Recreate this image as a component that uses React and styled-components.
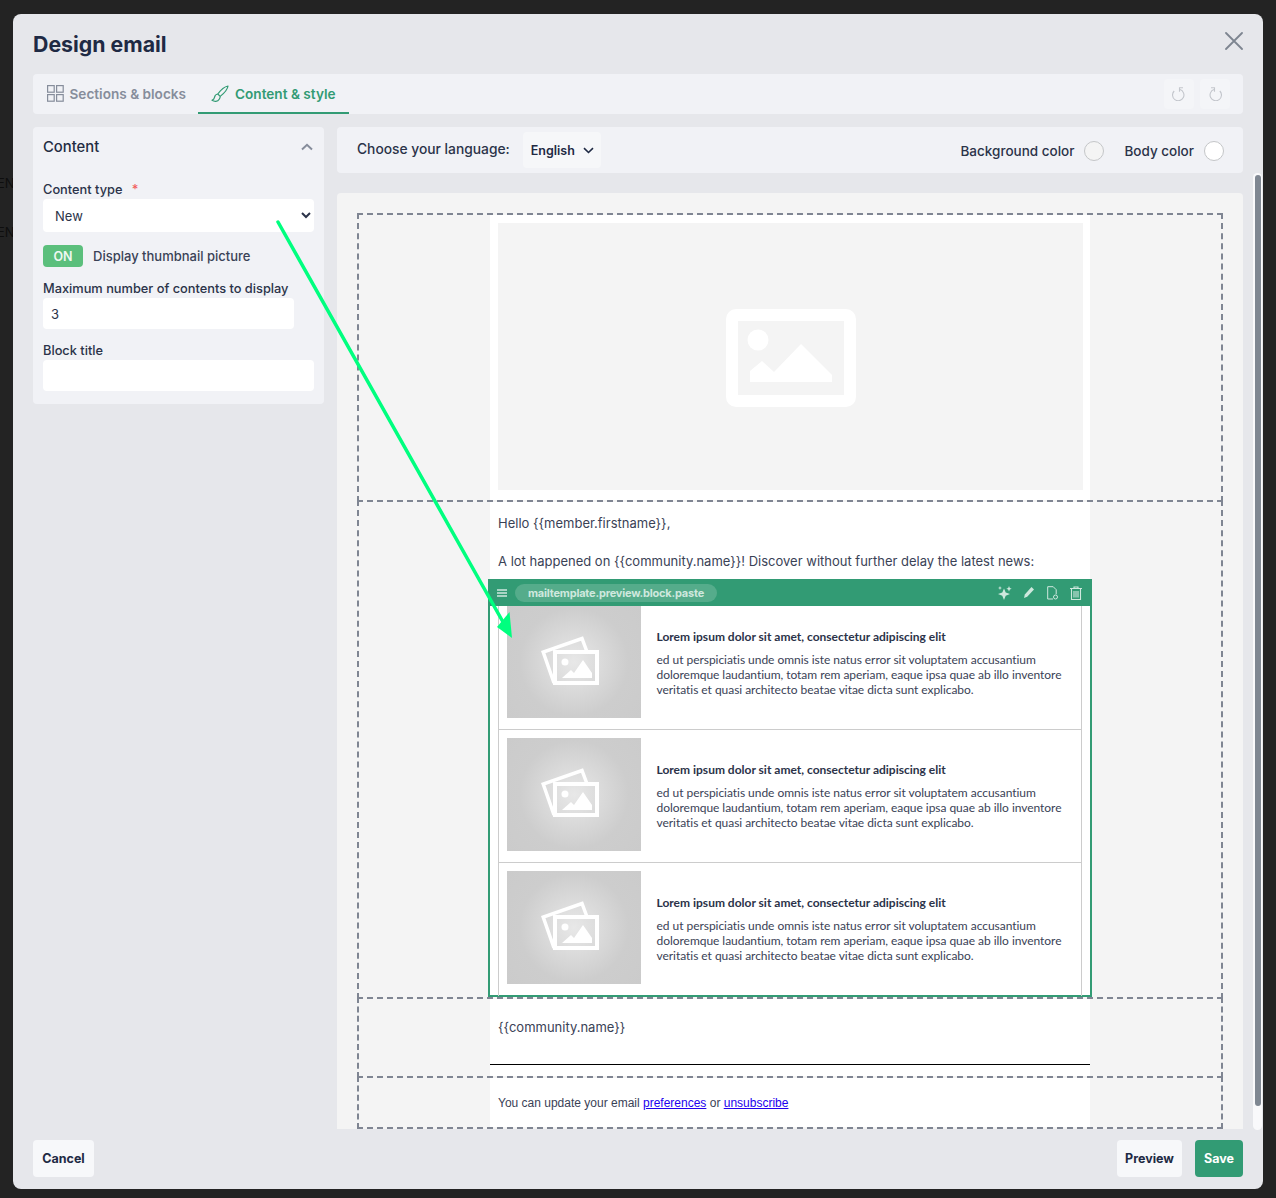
import React from "react";
import styled, { createGlobalStyle } from "styled-components";

const Global = createGlobalStyle`
  html, body { margin: 0; height: 100%; background: #232323; overflow: hidden; }
  #root { height: 100%; }
  * { box-sizing: border-box; }
`;

const UI = `Inter, "Liberation Sans", sans-serif`;
const navy = "#2b3349";
const green = "#329b74";

const Page = styled.div`
  position: relative;
  height: 1198px;
  padding: 14px 13px 9px;
  display: flex;
  font-family: ${UI};
`;
const BehindLabel = styled.span`
  position: absolute;
  left: -3px;
  top: ${(p) => p.$top}px;
  font-size: 13px;
  color: #0e0e0e;
`;
const Modal = styled.div`
  position: relative;
  z-index: 1;
  flex: 1;
  background: #e6e7eb;
  border-radius: 8px;
  padding: 0 20px 12px;
  display: flex;
  flex-direction: column;
  overflow: hidden;
`;
const Header = styled.div`
  height: 60px;
  flex: none;
  display: flex;
  align-items: center;
  justify-content: space-between;
`;
const Title = styled.h1`
  margin: 0;
  font-size: 21.3px;
  line-height: 60px;
  font-weight: 700;
  color: #1f2a44;
`;
const CloseBtn = styled.button`
  border: 0;
  background: none;
  padding: 0;
  display: flex;
  margin-top: -6px;
  color: #7d8590;
`;
const TabBar = styled.div`
  height: 40px;
  flex: none;
  background: #f1f2f6;
  border-radius: 4px;
  display: flex;
  align-items: stretch;
  padding-left: 13.5px;
`;
const Tab = styled.div`
  display: flex;
  align-items: center;
  gap: 6px;
  font-size: 13.6px;
  font-weight: 600;
  padding: ${(p) => (p.$active ? "0 13px" : "0")};
  margin-left: ${(p) => (p.$active ? "12px" : "0")};
  color: ${(p) => (p.$active ? green : "#868d9b")};
  border-bottom: 2px solid ${(p) => (p.$active ? green : "transparent")};
  padding-top: 1px;
`;
const History = styled.div`
  margin-left: auto;
  margin-right: 13px;
  display: flex;
  gap: 6px;
  align-items: center;
`;
const HistoryBtn = styled.div`
  width: 30px;
  height: 30px;
  background: #f4f5f8;
  border-radius: 4px;
  display: flex;
  align-items: center;
  justify-content: center;
  color: #c3c6cc;
`;
const Columns = styled.div`
  flex: 1;
  min-height: 0;
  margin-top: 13px;
  display: grid;
  grid-template-columns: 291px 906px;
  gap: 13px;
`;
const Side = styled.section`
  align-self: start;
  height: 277px;
  background: #f1f2f6;
  border-radius: 4px;
  padding: 0 10px;
`;
const SideHead = styled.div`
  height: 40px;
  display: flex;
  align-items: center;
  justify-content: space-between;
  font-size: 14.8px;
  font-weight: 500;
  color: #232c42;
`;
const Chevron = styled.span`
  display: flex;
  color: #868d9b;
  margin-right: 1px;
`;
const FieldLabel = styled.label`
  display: block;
  font-size: 12.8px;
  font-weight: 500;
  line-height: 17px;
  color: ${navy};
  margin-top: ${(p) => p.$mt}px;
`;
const Required = styled.span`
  color: #f25c5c;
  margin-left: 6px;
`;
const Select = styled.select`
  display: block;
  width: 271px;
  height: 33px;
  border: 0;
  border-radius: 4px;
  background: #fff;
  font: 400 13px ${UI};
  color: ${navy};
  padding: 0 8px;
  margin-top: 1px;
`;
const Input = styled.input`
  display: block;
  width: ${(p) => p.$w}px;
  height: 31px;
  border: 0;
  border-radius: 4px;
  background: #fff;
  font: 400 13px ${UI};
  color: ${navy};
  padding: 0 8px;
  margin-top: 1px;
`;
const SwitchRow = styled.div`
  display: flex;
  align-items: center;
  gap: 10px;
  margin-top: 13px;
  font-size: 13px;
  font-weight: 500;
  color: #3a4256;
`;
const Toggle = styled.span`
  width: 40px;
  height: 22px;
  border-radius: 4px;
  background: #5bbf7c;
  color: #eef8f1;
  font-size: 12.5px;
  font-weight: 600;
  display: flex;
  align-items: center;
  justify-content: center;
`;
const Main = styled.div`
  min-height: 0;
  display: flex;
  flex-direction: column;
  gap: 20px;
`;
const LangBar = styled.div`
  height: 46px;
  flex: none;
  background: #f1f2f6;
  border-radius: 4px;
  display: flex;
  align-items: center;
  padding: 0 19px 0 20px;
  font-size: 13.5px;
  font-weight: 500;
  color: #2b3349;
`;
const LangLabel = styled.span`
  font-size: 13.8px;
  margin-top: -2px;
`;
const LangBtn = styled.div`
  height: 36px;
  width: 78px;
  margin-left: 13px;
  border-radius: 4px;
  background: #f6f7f9;
  display: flex;
  align-items: center;
  justify-content: space-between;
  padding: 0 7px 0 8px;
  font-size: 12.5px;
  font-weight: 600;
  color: #1f2a44;
`;
const ColorGroup = styled.div`
  display: flex;
  align-items: center;
  gap: 10px;
  margin-left: ${(p) => (p.$first ? "auto" : "20px")};
  padding-top: 2px;
`;
const Swatch = styled.span`
  width: 20px;
  height: 20px;
  border-radius: 50%;
  border: 1px solid #c4c6c8;
  background: ${(p) => p.$c};
`;
const Canvas = styled.div`
  flex: 1;
  min-height: 0;
  overflow: hidden;
  background: #f4f4f4;
  border-radius: 4px 4px 0 0;
  padding: 20px 20px 0;
`;
const Zone = styled.div`
  position: relative;
  width: 866px;
  border: 2px dashed #7f8592;
  margin-top: ${(p) => (p.$first ? 0 : "-2px")};
  height: ${(p) => p.$h}px;
  overflow: ${(p) => (p.$clip ? "hidden" : "visible")};
`;
const Email = styled.div`
  width: 600px;
  height: 100%;
  margin-left: 131px;
  background: #fff;
  font-family: Lato, sans-serif;
  font-size: 14px;
  color: #3a4256;
`;
const HeroFrame = styled.div`
  height: 100%;
  padding: 8px 7px 10px 8px;
`;
const Hero = styled.div`
  height: 100%;
  background: #f4f4f4;
  display: flex;
  align-items: center;
  justify-content: center;
  color: #fff;
  padding-top: 2px;
`;
const Para = styled.p`
  margin: 0;
  padding: ${(p) => p.$pad};
  font-family: Inter, sans-serif;
  font-size: 13px;
  line-height: 19px;
  color: #3a4256;
`;
const Block = styled.div`
  position: relative;
  width: 604px;
  margin-left: -2px;
  margin-top: 8px;
  height: 418px;
  border: 2px solid ${green};
  border-top: 0;
  padding: 0 8px;
`;
const BlockBar = styled.div`
  height: 27px;
  margin: 0 -10px;
  background: ${green};
  display: flex;
  align-items: center;
  padding: 0 10px 0 9px;
  color: #cfe8de;
`;
const BlockLabel = styled.span`
  margin-left: 8px;
  height: 18px;
  padding: 0 13px;
  border-radius: 9px;
  background: #55ac8b;
  display: flex;
  align-items: center;
  font-family: ${UI};
  font-size: 11px;
  font-weight: 700;
  letter-spacing: -0.2px;
  color: #cfe8de;
`;
const BlockTools = styled.div`
  margin-left: auto;
  display: flex;
  align-items: center;
  gap: 12.500px;
`;
const Rows = styled.div`
  border-left: 1px solid #ccc;
  border-right: 1px solid #ccc;
  width: 584px;
  height: 390px;
`;
const Row = styled.div`
  padding: ${(p) => (p.$first ? "0 8px 11px" : p.$last ? "8px 8px 12px" : "8px 8px 11px")};
  border-bottom: ${(p) => (p.$last ? "0" : "1px solid #ccc")};
  display: flex;
  align-items: stretch;
  gap: 15.500px;
  height: ${(p) => (p.$first ? "124px" : "133px")};
`;
const Thumb = styled.div`
  width: 134px;
  flex: none;
  background: radial-gradient(circle at 50% 50%, #e8e8e8 0%, #cdcdcd 62%, #cbcbcb 100%);
  display: flex;
  align-items: center;
  justify-content: center;
  color: #fff;
  padding: 0 8px 4px 0;
`;
const RowText = styled.div`
  flex: 1;
  padding-top: ${(p) => (p.$first ? "23px" : "24px")};
  font-family: Lato, sans-serif;
  font-size: 12px;
  color: #3a4256;
`;
const RowTitle = styled.div`
  font-weight: 700;
  line-height: 15px;
  color: #2b3349;
  margin-bottom: 8px;
`;
const RowBody = styled.div`
  line-height: 15px;
  width: 412px;
  letter-spacing: -0.04px;
`;
const Rule = styled.div`
  height: 1px;
  background: #000;
  margin-top: 27px;
`;
const Legal = styled.p`
  margin: 0;
  padding: 17px 8px;
  font-family: "Liberation Sans", sans-serif;
  font-size: 12px;
  line-height: 16px;
  color: #3a4256;
  & a { color: #2200ee; }
`;
const Footer = styled.div`
  flex: none;
  margin-top: 11px;
  height: 37px;
  display: flex;
  align-items: stretch;
  gap: 13px;
`;
const Btn = styled.button`
  border: 0;
  border-radius: 4px;
  height: 37px;
  width: ${(p) => p.$w}px;
  margin-right: ${(p) => (p.$push ? "auto" : "0")};
  background: ${(p) => (p.$primary ? green : "#f7f8fa")};
  color: ${(p) => (p.$primary ? "#fff" : "#1f2a44")};
  font: 700 12.500px ${UI};
`;
const Scrollbar = styled.div`
  position: absolute;
  top: 159px;
  right: 1px;
  width: 9px;
  height: 957px;
  background: #f9f9fb;
  border-radius: 5px;
  padding: 2px 1px 0 2px;
`;
const Thumbbar = styled.div`
  height: 931px;
  border-radius: 3px;
  background: #7f8792;
`;
const ArrowLayer = styled.svg`
  position: absolute;
  left: 0;
  top: 0;
  z-index: 2;
  pointer-events: none;
`;

const GridIcon = () => (
  <svg width="17" height="17" viewBox="0 0 17 17" fill="none" stroke="currentColor" strokeWidth="1.2">
    <rect x=".6" y=".6" width="6.6" height="6.6" /><rect x="9.6" y=".6" width="6.6" height="6.6" />
    <rect x=".6" y="9.6" width="6.6" height="6.6" /><rect x="9.6" y="9.6" width="6.6" height="6.6" />
  </svg>
);
const BrushIcon = () => (
  <svg width="18" height="18" viewBox="0 0 18 18" fill="none" stroke="currentColor" strokeWidth="1.2" strokeLinejoin="round">
    <path d="M17 1c-3 .6-7 3.6-10.2 8l2.4 2.4C13.4 8 16.6 4.200 17 1Z" />
    <path d="M6.800 9c-2.300.3-3 1.600-3.300 3.300-.2 1.200-1 2.200-2.500 3 2.200 1.400 5.700 1.600 7.200-1 .6-1 1-2 1-2.900" />
  </svg>
);
const CloseIcon = () => (
  <svg width="18" height="18" viewBox="0 0 18 18" stroke="currentColor" strokeWidth="1.8" strokeLinecap="round">
    <path d="M1 1l16 16M17 1 1 17" />
  </svg>
);
const UndoIcon = ({ flip }) => (
  <svg width="14" height="14" viewBox="0 0 14 14" fill="none" stroke="currentColor" strokeWidth="1.1"
    style={flip ? { transform: "scaleX(-1)" } : undefined}>
    <path d="M2.200 4A5.700 5.700 0 1 0 8 2.600" />
    <path d="M11 .8H7.500V4.800" />
  </svg>
);
const ChevronUp = () => (
  <svg width="12" height="8" viewBox="0 0 12 8" fill="none" stroke="currentColor" strokeWidth="2">
    <path d="M1 6.500 6 1.800l5 4.700" />
  </svg>
);
const ChevronDown = () => (
  <svg width="11" height="7" viewBox="0 0 11 7" fill="none" stroke="currentColor" strokeWidth="1.600">
    <path d="M1 1.200 5.500 5.500 10 1.200" />
  </svg>
);
const HeroIcon = () => (
  <svg width="130" height="98" viewBox="0 0 130 98" fill="currentColor">
    <path fillRule="evenodd" d="M10 0h110a10 10 0 0 1 10 10v78a10 10 0 0 1-10 10H10A10 10 0 0 1 0 88V10A10 10 0 0 1 10 0Zm2 12v74h106V12Z" />
    <circle cx="32" cy="31" r="10.500" />
    <path d="M24 73V62l12-10 12 11 27-28 31 31v7Z" />
  </svg>
);
const PhotosIcon = () => (
  <svg width="59" height="51" viewBox="0 0 59 51" fill="none" stroke="currentColor">
    <path strokeWidth="3.500" d="M13 48 2.200 17 41 3.500l4.500 12" />
    <rect x="14" y="17" width="42" height="31" strokeWidth="4" />
    <path stroke="none" fill="currentColor" d="M21 43l9-8 3 3 9-13 9 13v5Z" />
    <circle cx="24" cy="27" r="3.500" stroke="none" fill="currentColor" />
  </svg>
);
const MenuIcon = () => (
  <svg width="10" height="8" viewBox="0 0 10 8" stroke="currentColor" strokeWidth="1.300">
    <path d="M0 1h10M0 4h10M0 7h10" />
  </svg>
);
const SparkIcon = () => (
  <svg width="14" height="14" viewBox="0 0 14 14" fill="currentColor">
    <path d="M6 2.500l1.700 4L12 8 7.700 9.700 6 14 4.300 9.700 0 8l4.300-1.500Z" />
    <path d="M11 0l.8 1.900 1.900.8-1.900.8L11 5.500l-.8-2-1.900-.8 1.900-.8Z" />
    <path d="M2 0l.6 1.400 1.400.6-1.400.6L2 4l-.6-1.400L0 2l1.400-.6Z" />
  </svg>
);
const PencilIcon = () => (
  <svg width="10" height="11" viewBox="0 0 10 11" fill="currentColor">
    <path d="M7.500 0 10 2.400 3.200 9.800 0 11l.8-3.400Z" />
  </svg>
);
const DocIcon = () => (
  <svg width="11" height="14" viewBox="0 0 11 14" fill="none" stroke="currentColor" strokeWidth="1">
    <path d="M6 13H.7V.7h5.500l3 3v4.500" />
    <circle cx="8.500" cy="11" r="2" />
  </svg>
);
const TrashIcon = () => (
  <svg width="12" height="14" viewBox="0 0 12 14" fill="none" stroke="currentColor" strokeWidth="1.100">
    <path d="M0 2.500h12M4 2.500V1h4v1.500" />
    <path d="M1.500 3v10.500h9V3M4 5v6.500M6 5v6.500M8 5v6.500" />
  </svg>
);

const ITEMS = [0, 1, 2];
const lorem = "ed ut perspiciatis unde omnis iste natus error sit voluptatem accusantium doloremque laudantium, totam rem aperiam, eaque ipsa quae ab illo inventore veritatis et quasi architecto beatae vitae dicta sunt explicabo.";

export default function App() {
  return (
    <Page>
      <Global />
      <BehindLabel $top={175}>EN</BehindLabel>
      <BehindLabel $top={224}>EN</BehindLabel>
      <Modal>
        <Header>
          <Title>Design email</Title>
          <CloseBtn aria-label="Close"><CloseIcon /></CloseBtn>
        </Header>
        <TabBar>
          <Tab><GridIcon /> Sections &amp; blocks</Tab>
          <Tab $active><BrushIcon /> Content &amp; style</Tab>
          <History>
            <HistoryBtn><UndoIcon /></HistoryBtn>
            <HistoryBtn><UndoIcon flip /></HistoryBtn>
          </History>
        </TabBar>
        <Columns>
          <Side>
            <SideHead>Content <Chevron><ChevronUp /></Chevron></SideHead>
            <FieldLabel $mt={14}>Content type <Required>*</Required></FieldLabel>
            <Select defaultValue="New"><option>New</option></Select>
            <SwitchRow><Toggle>ON</Toggle> Display thumbnail picture</SwitchRow>
            <FieldLabel $mt={13}>Maximum number of contents to display</FieldLabel>
            <Input $w={251} defaultValue="3" />
            <FieldLabel $mt={13}>Block title</FieldLabel>
            <Input $w={271} />
          </Side>
          <Main>
            <LangBar>
              <LangLabel>Choose your language:</LangLabel>
              <LangBtn>English <ChevronDown /></LangBtn>
              <ColorGroup $first>Background color <Swatch $c="#f4f4f4" /></ColorGroup>
              <ColorGroup>Body color <Swatch $c="#fff" /></ColorGroup>
            </LangBar>
            <Canvas>
              <Zone $first $h={289}>
                <Email>
                  <HeroFrame><Hero><HeroIcon /></Hero></HeroFrame>
                </Email>
              </Zone>
              <Zone $h={499}>
                <Email>
                  <Para $pad="12px 8px 0">Hello {"{{member.firstname}}"},</Para>
                  <Para $pad="19px 8px 0">A lot happened on {"{{community.name}}"}! Discover without further delay the latest news:</Para>
                  <Block>
                    <BlockBar>
                      <MenuIcon />
                      <BlockLabel>mailtemplate.preview.block.paste</BlockLabel>
                      <BlockTools>
                        <SparkIcon /><PencilIcon /><DocIcon /><TrashIcon />
                      </BlockTools>
                    </BlockBar>
                    <Rows>
                      {ITEMS.map((i) => (
                        <Row key={i} $first={i === 0} $last={i === 2}>
                          <Thumb><PhotosIcon /></Thumb>
                          <RowText $first={i === 0}>
                            <RowTitle>Lorem ipsum dolor sit amet, consectetur adipiscing elit</RowTitle>
                            <RowBody>{lorem}</RowBody>
                          </RowText>
                        </Row>
                      ))}
                    </Rows>
                  </Block>
                </Email>
              </Zone>
              <Zone $h={81}>
                <Email>
                  <Para $pad="19px 8px 0">{"{{community.name}}"}</Para>
                  <Rule />
                </Email>
              </Zone>
              <Zone $h={53} $clip>
                <Email>
                  <Legal>You can update your email <a href="#p">preferences</a> or <a href="#u">unsubscribe</a></Legal>
                </Email>
              </Zone>
            </Canvas>
          </Main>
        </Columns>
        <Footer>
          <Btn $w={61} $push>Cancel</Btn>
          <Btn $w={65}>Preview</Btn>
          <Btn $w={48} $primary>Save</Btn>
        </Footer>
        <Scrollbar><Thumbbar /></Scrollbar>
      </Modal>
      <ArrowLayer width="1276" height="1198" viewBox="0 0 1276 1198">
        <path d="M278 222 503 622" stroke="#00ff7f" strokeWidth="3.5" strokeLinecap="round" fill="none" />
        <path d="M512 638 497 627 509.500 612Z" fill="#00ff7f" />
      </ArrowLayer>
    </Page>
  );
}
